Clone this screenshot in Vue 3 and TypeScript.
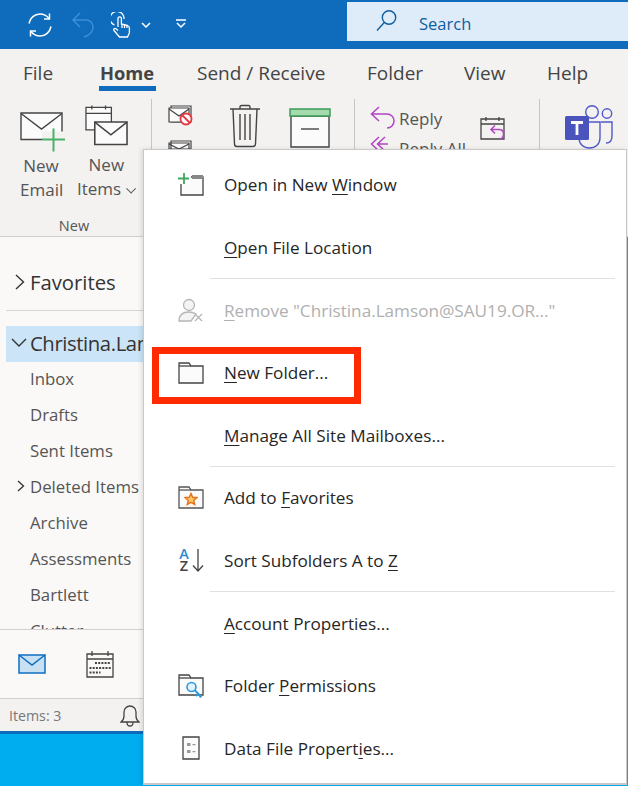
<script setup lang="ts">
interface MenuItem {
  icon: string
  before: string
  accel: string
  after: string
  disabled?: boolean
  sep?: boolean
}

const folders = [
  { name: 'Inbox' },
  { name: 'Drafts' },
  { name: 'Sent Items' },
  { name: 'Deleted Items', chevron: true },
  { name: 'Archive' },
  { name: 'Assessments' },
  { name: 'Bartlett' },
  { name: 'Clutter' },
]

const tabs = [
  { label: 'File', cls: 't-file' },
  { label: 'Home', cls: 't-home' },
  { label: 'Send / Receive', cls: 't-send' },
  { label: 'Folder', cls: 't-folder' },
  { label: 'View', cls: 't-view' },
  { label: 'Help', cls: 't-help' },
]

const items: MenuItem[] = [
  { icon: 'window', before: 'Open in New ', accel: 'W', after: 'indow' },
  { icon: '', before: '', accel: 'O', after: 'pen File Location', sep: true },
  { icon: 'person', before: '', accel: 'R', after: 'emove "Christina.Lamson@SAU19.OR..."', disabled: true },
  { icon: 'folder', before: '', accel: 'N', after: 'ew Folder...' },
  { icon: '', before: '', accel: 'M', after: 'anage All Site Mailboxes...', sep: true },
  { icon: 'star', before: 'Add to ', accel: 'F', after: 'avorites' },
  { icon: 'sort', before: 'Sort Subfolders A to ', accel: 'Z', after: '', sep: true },
  { icon: '', before: '', accel: 'A', after: 'ccount Properties...' },
  { icon: 'key', before: 'Folder ', accel: 'P', after: 'ermissions' },
  { icon: 'data', before: 'Data File Propert', accel: 'i', after: 'es...' },
]
</script>

<template>
  <div class="app">
    <header class="titlebar">
      <svg class="qa qa-sync" width="26" height="26" viewBox="0 0 26 26" fill="none" stroke="#fff" stroke-width="1.5">
        <path d="M2 11.5C3 6 7.500 2 13 2c3.800 0 6.800 1.700 9 4.500" />
        <path d="M24 14.500C23 20 18.500 24 13 24c-3.800 0-6.800-1.700-9-4.500" />
        <path d="M22.500 1.500V7h-5.500M3.500 24.500V19H9" />
      </svg>
      <svg class="qa qa-undo" width="24" height="26" viewBox="0 0 24 26" fill="none" stroke="#3d8fd6" stroke-width="1.500">
        <path d="M9 1 2 8l7 7M2 8h13c4 0 7 3 7 7 0 4-3 8-9 10" />
      </svg>
      <svg class="qa qa-touch" width="20" height="26" viewBox="0 0 20 26" fill="none" stroke="#fff" stroke-width="1.300">
        <path d="M3.500 13A7 7 0 1 1 13 7" />
        <path d="M7 15V6.500a1.700 1.700 0 0 1 3.400 0V12l6 1.500c1.300.4 2 1.300 2 2.700v3.800c0 1.200-.4 2.200-1 3L16.500 25H8.500L3 18.500c-1-1.300.6-2.800 2-1.700L7 18.500" />
        <path d="M11 12v4M13.500 13v3M16 13.500V16" />
      </svg>
      <svg class="qa qa-chev" width="10" height="6" viewBox="0 0 10 6" fill="none" stroke="#fff" stroke-width="1.500"><path d="m1 1 4 4 4-4" /></svg>
      <svg class="qa qa-more" width="12" height="10" viewBox="0 0 12 10" fill="none" stroke="#fff" stroke-width="1.500"><path d="M1 1h10M2 4l4 4 4-4" /></svg>
      <div class="search">
        <svg width="22" height="24" viewBox="0 0 22 24" fill="none" stroke="#0f5c9e" stroke-width="1.400">
          <circle cx="13" cy="8.500" r="6.700" /><path d="M8.300 13.500 1 21.500" />
        </svg>
        <span>Search</span>
      </div>
    </header>

    <nav class="tabs">
      <span v-for="t in tabs" :key="t.label" class="tab" :class="t.cls">{{ t.label }}</span>
    </nav>

    <section class="ribbon">
      <div class="group group-new">
        <div class="big-row">
          <div class="big big-email">
            <svg width="46" height="42" viewBox="0 0 46 42" fill="none" stroke="#444" stroke-width="1.400">
              <path fill="#fbfbfb" d="M1 1.500h41V28H1z" />
              <path d="m1 2 20.500 15.500L42 2" />
              <rect x="22" y="20" width="24" height="22" fill="#f3f2f1" stroke="none" />
              <path stroke="#4caf6a" stroke-width="2" d="M33.500 17v23M22 28h23" />
            </svg>
            <span>New<br />Email</span>
          </div>
          <div class="big big-items">
            <svg width="44" height="44" viewBox="0 0 44 44" fill="none" stroke="#444" stroke-width="1.300">
              <path fill="#fbfbfb" d="M1 3h26v23H1z" /><path d="M1 9h26M7 1v4M21 1v4" />
              <path fill="#fbfbfb" stroke-width="1.600" d="M10 18h33v23H10z" /><path stroke-width="1.600" d="m10 18 16.500 13L43 18" />
            </svg>
            <span>New<br />Items <i class="small-chev"></i></span>
          </div>
        </div>
        <div class="group-label">New</div>
      </div>
      <div class="vsep"></div>
      <div class="group-del">
        <svg class="ignore" width="26" height="44" viewBox="0 0 26 44" fill="none" stroke="#444" stroke-width="1.200">
          <path fill="#fbfbfb" d="M3 1h20v16H3z" /><path fill="#fbfbfb" d="M1 3h20v14H1z" /><path d="m1 4 10 7 10-7" />
          <circle cx="18" cy="14" r="5.500" fill="#fff" stroke="#e8373f" stroke-width="1.800" /><path stroke="#e8373f" stroke-width="1.800" d="m14 10 8 8" />
          <path fill="#fbfbfb" d="M3 36h20v8H3zM1 38h20v6H1z" /><path d="m1 39 10 5 10-5" />
        </svg>
        <svg class="trash" width="32" height="44" viewBox="0 0 32 44" fill="none" stroke="#444" stroke-width="1.400">
          <path d="M1 5h30M11 5V3c0-1 .7-1.500 1.500-1.500h7C20.300 1.500 21 2 21 3v2" />
          <path d="M4 5l1.500 35c0 1.500 1 2.500 2.500 2.500h16c1.500 0 2.500-1 2.500-2.500L28 5" />
          <path d="M11 10v26M16 10v26M21 10v26" />
        </svg>
        <svg class="archive" width="42" height="40" viewBox="0 0 42 40" fill="none" stroke="#444" stroke-width="1.400">
          <path fill="#fbfbfb" d="M2 8h38v31H2z" />
          <path fill="#a3dbaf" stroke="#3d9c59" stroke-width="1.500" d="M1 1h40v7H1z" />
          <path d="M12 21h18" />
        </svg>
      </div>
      <div class="vsep"></div>
      <div class="group-respond">
        <div class="reply">
          <svg width="26" height="24" viewBox="0 0 26 24" fill="none" stroke="#b146c2" stroke-width="1.500">
            <path d="M9 1 1.500 8 9 15M2 8h15c4 0 7 3 7 7s-3 7-7 7" />
          </svg>
          <span>Reply</span>
        </div>
        <div class="reply reply-all">
          <svg width="26" height="24" viewBox="0 0 26 24" fill="none" stroke="#b146c2" stroke-width="1.500">
            <path d="M9 1 1.500 8 9 15M15 1 7.500 8 15 15M8 8h10" />
          </svg>
          <span>Reply All</span>
        </div>
      </div>
      <svg class="cal-reply" width="26" height="26" viewBox="0 0 26 26" fill="none" stroke="#444" stroke-width="1.300">
        <path d="M1 3h23v20H1zM1 8h23M6 1v4M19 1v4" />
        <path stroke="#b146c2" stroke-width="1.500" d="m15 9.500-4 4 4 4M11.500 13.500H19c3 0 4.500 2 4.500 4.500s-1.500 5-4.500 5" />
      </svg>
      <div class="vsep vsep-teams"></div>
      <svg class="teams" width="50" height="46" viewBox="0 0 50 46" fill="none">
        <circle cx="27" cy="8" r="6.300" stroke="#5059c9" stroke-width="1.400" fill="#f3f2f1" />
        <circle cx="42" cy="9.500" r="4.700" stroke="#5059c9" stroke-width="1.400" />
        <path stroke="#5059c9" stroke-width="1.400" d="M36 18h11v14c0 4-2 7-6 7M14 18h21v16c0 6-4.500 10-10.500 10S14 40 14 34z" />
        <rect x="0" y="12" width="24" height="24" rx="1.500" fill="#4b53bc" />
        <path stroke="#fff" stroke-width="2.800" d="M6 18.500h12M12 18.500V31" />
      </svg>
    </section>

    <section class="body">
      <aside class="nav">
        <div class="favorites">
          <svg width="10" height="16" viewBox="0 0 10 16" fill="none" stroke="#333" stroke-width="1.400"><path d="m1 1 7.500 7L1 15" /></svg>
          <span>Favorites</span>
        </div>
        <div class="account">
          <svg width="16" height="10" viewBox="0 0 16 10" fill="none" stroke="#333" stroke-width="1.400"><path d="m1 1 7 7 7-7" /></svg>
          <span>Christina.Lamson@SAU19.ORG</span>
        </div>
        <ul class="folders">
          <li v-for="f in folders" :key="f.name" class="folder-row">
            <svg v-if="f.chevron" width="8" height="12" viewBox="0 0 8 12" fill="none" stroke="#333" stroke-width="1.300"><path d="m1 1 5.500 5L1 11" /></svg>
            <span>{{ f.name }}</span>
          </li>
        </ul>
      </aside>
      <div class="switcher">
        <svg class="sw-mail" width="28" height="20" viewBox="0 0 28 20" stroke="#106ebe" stroke-width="1.500" fill="#c7e0f4">
          <path d="M1 1h26v18H1z" /><path fill="none" d="m1 1 13 10L27 1" />
        </svg>
        <svg class="sw-cal" width="28" height="28" viewBox="0 0 28 28" fill="none" stroke="#444" stroke-width="1.300">
          <path d="M1 4h26v23H1zM1 9h26M6 1v5M22 1v5" />
          <path stroke-width="2.200" stroke-dasharray="2 1.200" d="M9 13h16M3.500 18h21.500M3.500 22.500h11" />
        </svg>
      </div>
      <footer class="status">
        <span>Items: 3</span>
        <svg width="20" height="23" viewBox="0 0 20 23" fill="none" stroke="#444" stroke-width="1.300">
          <path d="M1 18c2-1.500 3-3.500 3-6V8a6 6 0 0 1 12 0v4c0 2.500 1 4.500 3 6zM7 18.500c0 2 1.300 3.500 3 3.500s3-1.500 3-3.500" />
        </svg>
      </footer>
      <div class="desktop"></div>
    </section>

    <div class="menu">
      <template v-for="item in items" :key="item.accel">
        <div class="row" :class="{ disabled: item.disabled }">
          <span class="ico">
            <svg v-if="item.icon === 'window'" width="26" height="24" viewBox="0 0 26 24" fill="none" stroke="#444" stroke-width="1.300">
              <path fill="#fbfbfb" d="M3 4h22v18H3z" /><path d="M14 2h11v4H14z" fill="#888" stroke="none" />
              <rect x="0" y="0" width="13" height="11" fill="#fff" stroke="none" />
              <path stroke="#3fa75f" stroke-width="1.800" d="M6 0v11M0 5.500h11" />
            </svg>
            <svg v-else-if="item.icon === 'person'" width="26" height="24" viewBox="0 0 26 24" fill="none" stroke="#b5b5b5" stroke-width="1.300">
              <circle cx="11" cy="7" r="5.500" fill="#f4f4f4" />
              <path fill="#f4f4f4" d="M1 23c0-5 3-9 10-9 3 0 5 .7 7 2l-5 7z" />
              <path d="m17 16 7 7M24 16l-7 7" />
            </svg>
            <svg v-else-if="item.icon === 'folder'" width="26" height="22" viewBox="0 0 26 22" fill="#fbfbfb" stroke="#444" stroke-width="1.300">
              <path d="M1 1h10l2 3h12v17H1z" /><path fill="none" d="M1 4h12" />
            </svg>
            <svg v-else-if="item.icon === 'star'" width="26" height="24" viewBox="0 0 26 24" fill="#fbfbfb" stroke="#555" stroke-width="1.300">
              <path d="M1 1h10l2 3h12v18H1z" /><path fill="none" d="M1 4h12" />
              <path fill="#f8c96b" stroke="#e8741c" stroke-width="1.500" d="m13 7.500 1.700 3.800 4.100.4-3.100 2.700 1 4-3.700-2.100-3.700 2.100 1-4-3.100-2.700 4.100-.4z" />
            </svg>
            <span v-else-if="item.icon === 'sort'" class="sort-ico">
              <span class="az"><b class="a">A</b><b class="z">Z</b></span>
              <svg width="12" height="24" viewBox="0 0 12 24" fill="none" stroke="#444" stroke-width="1.300"><path d="M6 1v22M1 17.500 6 23l5-5.500" /></svg>
            </span>
            <svg v-else-if="item.icon === 'key'" width="26" height="24" viewBox="0 0 26 24" fill="#fbfbfb" stroke="#444" stroke-width="1.300">
              <path d="M1 1h10l2 3h12v17H1z" /><path fill="none" d="M1 4h12" />
              <circle cx="13.500" cy="13" r="4.500" fill="#e3f1fb" stroke="#2b9ad8" stroke-width="1.600" />
              <path fill="none" stroke="#2b9ad8" stroke-width="2" d="m16.500 16 7 7M20 20l-2 2M23 22l-1.500 1.500" />
            </svg>
            <svg v-else-if="item.icon === 'data'" class="data-ico" width="18" height="24" viewBox="0 0 18 24" fill="#fbfbfb" stroke="#444" stroke-width="1.300">
              <path d="M1 1h16v22H1z" />
              <path fill="#999" stroke="none" d="M5 7h3.500v3H5zM5 14h3.500v3H5zM10.500 8h3v1.300h-3zM10.500 15h3v1.300h-3z" />
            </svg>
          </span>
          <span class="lbl">{{ item.before }}<u>{{ item.accel }}</u>{{ item.after }}</span>
        </div>
        <div v-if="item.sep" class="menu-sep"></div>
      </template>
    </div>
    <div class="highlight"></div>
  </div>
</template>

<style>
html, body { margin: 0; padding: 0; background: #00adef; }
</style>

<style scoped>
.app {
  position: relative;
  width: 628px;
  height: 786px;
  overflow: hidden;
  font-family: "Open Sans", "Noto Sans", sans-serif;
  color: #444;
  display: flex;
  flex-direction: column;
}
.titlebar {
  height: 49px;
  flex: none;
  background: #0f6cbd;
  display: flex;
  align-items: center;
  padding-left: 27px;
  box-sizing: border-box;
}
.qa { flex: none; }
.qa-undo { margin-left: 18px; margin-top: 1px; }
.qa-touch { margin-left: 16px; margin-top: 1px; }
.qa-chev { margin-left: 10px; }
.qa-more { margin-left: 24px; margin-top: -2px; }
.search {
  margin-left: auto;
  width: 281px;
  height: 39px;
  margin-top: -7px;
  background: #deecf9;
  display: flex;
  align-items: center;
  gap: 21px;
  padding-left: 29px;
  box-sizing: border-box;
  color: #0f5c9e;
  font-size: 16.500px;
}
.search span { padding-top: 5px; }

.tabs {
  height: 50px;
  flex: none;
  background: #f3f2f1;
  display: flex;
  align-items: flex-start;
  font-size: 19px;
  padding-top: 11px;
  box-sizing: border-box;
  color: #444;
}
.tab { line-height: 26px; white-space: nowrap; }
.t-file { margin-left: 23px; width: 77px; }
.t-home { width: 97px; font-weight: 700; font-size: 18.300px; position: relative; color: #444; }
.t-home::after {
  content: "";
  position: absolute;
  left: -1px;
  top: 26px;
  width: 57px;
  height: 5px;
  background: #0f6cbd;
}
.t-send { width: 170px; }
.t-folder { width: 97px; }
.t-view { width: 83px; }

.ribbon {
  height: 138px;
  flex: none;
  background: #f3f2f1;
  box-sizing: border-box;
  border-bottom: 1px solid #d2d0ce;
  display: flex;
  align-items: flex-start;
  font-size: 17px;
  color: #555;
}
.group-new {
  width: 151px;
  height: 137px;
  flex: none;
  display: flex;
  flex-direction: column;
}
.big-row { display: flex; padding-top: 11px; padding-left: 20px; height: 117px; box-sizing: border-box; }
.big { display: flex; flex-direction: column; align-items: center; text-align: center; line-height: 24px; }
.big svg { height: 45px; display: block; }
.big-email { width: 45px; align-items: flex-start; }
.big-email span { width: 42px; margin-top: -1px; }
.big-items { margin-left: 19px; width: 48px; align-items: flex-start; }
.big-items svg { width: 43px; height: 44px; margin-top: -6px; margin-bottom: 6px; margin-left: 1px; }
.big-items span { white-space: nowrap; margin-top: -1px; margin-left: -7px; text-align: center; }
.small-chev {
  display: inline-block;
  width: 6px;
  height: 6px;
  border-right: 1.500px solid #555;
  border-bottom: 1.500px solid #555;
  transform: rotate(45deg) translate(-3px, -1px);
  margin-left: 3px;
}
.group-label { text-align: center; font-size: 14.500px; padding-right: 3px; line-height: 20px; }
.vsep { width: 1px; height: 50px; background: #c8c6c4; flex: none; }
.group-del { width: 202px; flex: none; display: flex; position: relative; height: 60px; }
.ignore { margin: 6px 0 0 16px; flex: none; }
.trash { margin: 5px 0 0 35px; flex: none; }
.archive { margin: 9px 0 0 28px; flex: none; }
.group-respond { width: 110px; flex: none; margin-left: 15px; padding-top: 4px; display: flex; flex-direction: column; }
.reply { display: flex; align-items: center; gap: 3px; height: 30px; white-space: nowrap; flex: none; }
.cal-reply { margin: 17px 0 0 0; flex: none; }
.vsep-teams { margin-left: 33px; }
.teams { margin: 5px 0 0 25px; flex: none; }

.body { flex: 1; min-height: 0; display: flex; flex-direction: column; background: #00adef; }
.nav {
  height: 393px;
  flex: none;
  width: 143px;
  background: #faf9f8;
  overflow: hidden;
  box-sizing: border-box;
  border-bottom: 1px solid #d2d0ce;
  padding-left: 6px;
  color: #444;
}
.favorites {
  height: 74px;
  display: flex;
  align-items: center;
  gap: 5px;
  padding-left: 9px;
  padding-top: 16px;
  box-sizing: border-box;
  border-bottom: 1px solid #d8d6d4;
  font-size: 20.300px;
  color: #333;
}
.favorites svg { flex: none; }
.account {
  margin-top: 15px;
  height: 36px;
  background: #cce4f7;
  display: flex;
  align-items: center;
  gap: 3px;
  padding-left: 5px;
  padding-bottom: 2px;
  box-sizing: border-box;
  font-size: 20.300px;
  letter-spacing: -0.4px;
  color: #333;
  white-space: nowrap;
  overflow: hidden;
}
.account svg { flex: none; }
.folders { list-style: none; margin: -2px 0 0; padding: 0; }
.folder-row {
  height: 36px;
  display: flex;
  align-items: center;
  padding-left: 24px;
  font-size: 16.800px;
  color: #555;
  position: relative;
}
.folder-row svg { position: absolute; left: 11px; top: 12px; }
.switcher {
  height: 69px;
  flex: none;
  width: 143px;
  background: #faf9f8;
  display: flex;
  align-items: center;
  box-sizing: border-box;
  border-bottom: 1px solid #d2d0ce;
  padding-left: 18px;
}
.sw-cal { margin-left: 40px; }
.status {
  height: 32px;
  flex: none;
  width: 131px;
  background: #f3f2f1;
  border-bottom: 3px solid #0f6cbd;
  display: flex;
  align-items: center;
  justify-content: space-between;
  padding: 0 3px 0 9px;
  box-sizing: content-box;
  font-size: 14.200px;
  color: #777;
}
.desktop { flex: 1; background: #00adef; }

.menu {
  position: absolute;
  left: 143px;
  top: 149px;
  width: 484px;
  height: 636px;
  box-sizing: border-box;
  background: #fff;
  border: 1px solid #c8c8c8;
  border-bottom-width: 2px;
  box-shadow: -2px 0 4px rgba(0, 0, 0, 0.1);
  padding-top: 3.600px;
  display: flex;
  flex-direction: column;
  z-index: 2;
}
.row {
  height: 62.600px;
  flex: none;
  display: flex;
  align-items: center;
  font-size: 17.150px;
  color: #262626;
  white-space: nowrap;
}
.row.disabled { color: #b0b0b0; }
.ico {
  width: 80px;
  flex: none;
  display: flex;
  justify-content: flex-start;
  padding-left: 34px;
  box-sizing: border-box;
}
.data-ico { margin-left: 4px; }
.row u { text-underline-offset: 3px; text-decoration-thickness: 1px; }
.menu-sep { height: 1px; margin: -1px 11px 0 66px; background: #e0e0e0; flex: none; }
.sort-ico { display: flex; align-items: center; gap: 2px; }
.az { display: flex; flex-direction: column; line-height: 12px; font-size: 14.500px; width: 12px; text-align: center; }
.az b { font-weight: 600; }
.az .a { color: #2b8ccf; }
.az .z { color: #444; }

.highlight {
  position: absolute;
  left: 152px;
  top: 347px;
  width: 209px;
  height: 57px;
  box-sizing: border-box;
  border: 7px solid #ff2a00;
  z-index: 3;
}
</style>
